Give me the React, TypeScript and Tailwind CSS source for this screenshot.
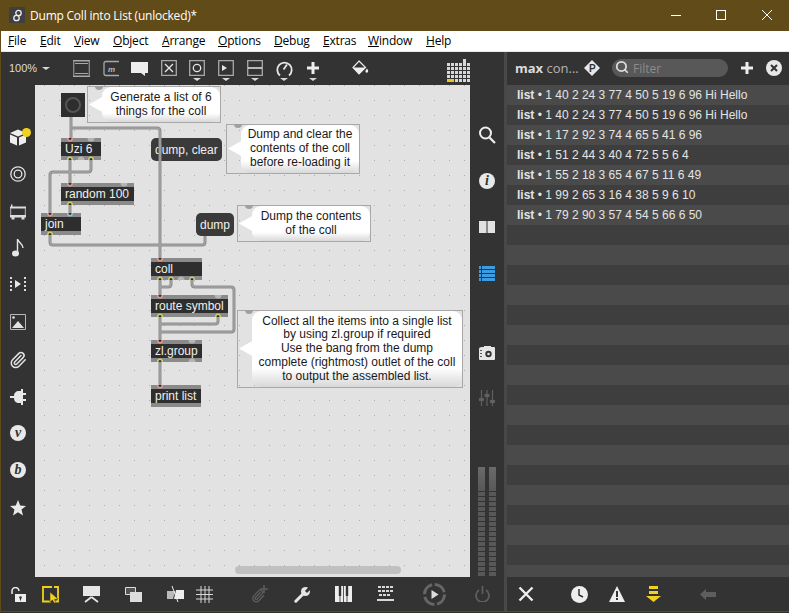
import type { ReactNode } from "react";
import { Paperclip, Search } from "lucide-react";

const LOG = [
  "1 40 2 24 3 77 4 50 5 19 6 96 Hi Hello",
  "1 40 2 24 3 77 4 50 5 19 6 96 Hi Hello",
  "1 17 2 92 3 74 4 65 5 41 6 96",
  "1 51 2 44 3 40 4 72 5 5 6 4",
  "1 55 2 18 3 65 4 67 5 11 6 49",
  "1 99 2 65 3 16 4 38 5 9 6 10",
  "1 79 2 90 3 57 4 54 5 66 6 50",
];
const MENU = [
  ["F", "ile", "left-[8px]"],
  ["E", "dit", "left-[40px]"],
  ["V", "iew", "left-[74px]"],
  ["O", "bject", "left-[113px]"],
  ["A", "rrange", "left-[162px]"],
  ["O", "ptions", "left-[218px]"],
  ["D", "ebug", "left-[274px]"],
  ["E", "xtras", "left-[323px]"],
  ["W", "indow", "left-[368px]"],
  ["H", "elp", "left-[426px]"],
];

function Ic({ c, box = "0 0 16 16", children }: { c: string; box?: string; children: ReactNode }) {
  return (
    <svg className={"absolute " + c} viewBox={box}>
      {children}
    </svg>
  );
}

function Obj({ c, children }: { c: string; children: ReactNode }) {
  return (
    <div className={"absolute flex h-[22px] flex-col justify-center bg-[#8a8a8a] " + c}>
      <div className="flex h-[14px] items-center whitespace-nowrap bg-[#2e2e2e] pl-[4px] text-[12px] text-[#f0f0f0]">{children}</div>
    </div>
  );
}

function Msg({ c, children }: { c: string; children: ReactNode }) {
  return (
    <div className={"absolute flex h-[23px] items-center whitespace-nowrap rounded-[5px] bg-[#3a3a3a] pl-[4px] text-[12px] text-[#f0f0f0] " + c}>
      {children}
    </div>
  );
}

function Comment({ c, children }: { c: string; children: ReactNode }) {
  return (
    <div className={"absolute border border-[#a8a8a8] " + c}>
      <div className="absolute left-[7px] top-[-1px] h-[4px] w-[8px] rounded-b-full bg-[#a0a0a0]" />
      <div className="absolute bottom-0 left-[14px] right-0 top-0 flex flex-col justify-center whitespace-nowrap rounded-[9px] bg-gradient-to-b from-white from-75% to-[#d8d8d8] text-center text-[12px] leading-[13.8px] text-[#1a1a1a]">
        {children}
      </div>
      <svg className="absolute left-[1px] top-[50%] mt-[-9px] h-[17px] w-[15px]" viewBox="0 0 15 17">
        <path d="M0 8.500 15 0v17z" fill="#fff" />
      </svg>
    </div>
  );
}

const Tri = ({ c }: { c: string }) => (
  <div className={"absolute h-0 w-0 border-x-[4px] border-t-[3px] border-x-transparent border-t-[#d8d8d8] " + c} />
);

const cords = [
  "M71 117V138",
  "M71 128H157Q160 128 160 131V258",
  "M70 160V183",
  "M91 160V169Q91 172 88 172H53Q50 172 50 175V213",
  "M70 205V213",
  "M50 235V242Q50 245 53 245H202Q205 245 205 242V236",
  "M160 280V295",
  "M171 280V284Q171 287 168 287H160",
  "M192 280V284Q192 287 195 287H231Q234 287 234 290V329Q234 332 231 332H160",
  "M160 317V340",
  "M218 317V321Q218 324 215 324H160",
  "M160 362V385",
];
const inlets = [[70, 138], [70, 183], [50, 213], [160, 258], [160, 295], [160, 340], [160, 385]];
const outlets = [[70, 160], [91, 160], [70, 205], [50, 235], [160, 280], [171, 280], [192, 280], [160, 317], [218, 317], [160, 362]];
const bumpsTop = [[91, 138], [124, 183], [192, 340], [218, 295]];
const bumpsBottom = [[81, 160], [181, 280], [192, 362]];

function Ports() {
  return (
    <svg className="absolute left-0 top-0 h-[613px] w-[789px]" viewBox="0 0 789 613">
      {bumpsTop.map(([x, y], i) => (
        <path key={"bt" + i} d={"M" + (x - 3.5) + " " + y + "a3.5 3.5 0 0 0 7 0z"} fill="#b4b4b4" />
      ))}
      {bumpsBottom.map(([x, y], i) => (
        <path key={"bb" + i} d={"M" + (x - 3.5) + " " + y + "a3.5 3.5 0 0 1 7 0z"} fill="#b4b4b4" />
      ))}
      {inlets.map(([x, y], i) => (
        <g key={"in" + i}>
          <path d={"M" + (x - 3) + " " + y + "a3 3.5 0 0 0 6 0z"} fill="#e39a8e" />
          <path d={"M" + (x - 1.5) + " " + y + "a1.5 2 0 0 0 3 0z"} fill="#3a2a2a" />
        </g>
      ))}
      <path d="M67 213a3 3.5 0 0 0 6 0z" fill="#8ec8d0" />
      <path d="M68.5 213a1.5 2 0 0 0 3 0z" fill="#2a3a3a" />
      {outlets.map(([x, y], i) => (
        <g key={"out" + i}>
          <path d={"M" + (x - 3) + " " + y + "a3 3.5 0 0 1 6 0z"} fill="#cdd06a" />
          <path d={"M" + (x - 1.5) + " " + y + "a1.5 2 0 0 1 3 0z"} fill="#33331f" />
        </g>
      ))}
    </svg>
  );
}

export default function App() {
  return (
    <div className="relative h-[613px] w-[789px] overflow-hidden bg-[#333333] [font-family:Liberation_Sans,Arial,sans-serif]">
      {/* title bar */}
      <div className="absolute left-0 top-0 h-[31px] w-full bg-[#614b18]" />
      <div className="absolute left-[9px] top-[7px] flex h-[16px] w-[16px] items-center justify-center bg-[#3f3f3f]">
        <svg className="h-[13px] w-[13px]" viewBox="0 0 13 13" fill="none" stroke="#eee" strokeWidth="1.3">
          <circle cx="7.500" cy="4" r="2.700" />
          <circle cx="5.500" cy="9" r="2.700" />
        </svg>
      </div>
      <div className="absolute left-[30px] top-[7px] text-[12px] leading-[17px] tracking-[-0.22px] text-white [font-family:Open_Sans,sans-serif]">
        Dump Coll into List (unlocked)*
      </div>
      <div className="absolute left-[671px] top-[15px] h-px w-[10px] bg-white" />
      <div className="absolute left-[716px] top-[10px] h-[10px] w-[10px] border border-white" />
      <svg className="absolute left-[762px] top-[10px] h-[10px] w-[10px]" viewBox="0 0 10 10" stroke="#fff">
        <path d="M0 0 10 10M10 0 0 10" />
      </svg>

      {/* menu */}
      <div className="absolute left-0 top-[31px] h-[20px] w-full bg-white" />
      {MENU.map(([u, rest, pos]) => (
        <div key={pos} className={"absolute top-[33px] text-[12px] leading-[16px] tracking-[-0.2px] text-black [font-family:Open_Sans,sans-serif] " + pos}>
          <span className="underline">{u}</span>
          {rest}
        </div>
      ))}
      <div className="absolute left-0 top-[51px] h-px w-full bg-[#e8e8e8]" />

      {/* patcher toolbar */}
      <div className="absolute left-[9px] top-[61px] text-[11px] leading-[14px] text-[#dddddd]">100%</div>
      <Tri c="left-[42px] top-[67px]" />
      <Ic c="left-[73px] top-[60px] h-[17px] w-[17px]" box="0 0 17 17">
        <path d="M0 0h17v1.500H0zM0 15.500h17V17H0zM2 3h13v1H2zM2 13h13v1H2z" fill="#a8a8a8" />
        <path d="M.7 1v15M16.300 1v15" stroke="#8a8a8a" strokeWidth="1.300" fill="none" />
      </Ic>
      <Ic c="left-[103px] top-[60px] h-[17px] w-[16px]">
        <path d="M16 1H3Q1 1 1 3v10q0 2 2 2h13" fill="none" stroke="#a8a8a8" strokeWidth="1.300" />
        <text x="5" y="11" fontSize="8" fontStyle="italic" fontWeight="700" fill="#b8b8b8">m</text>
      </Ic>
      <Ic c="left-[131px] top-[61px] h-[16px] w-[17px]" box="0 0 17 16">
        <path d="M0 1h17v11h-3v3l-4-3H0z" fill="#eeeeee" />
      </Ic>
      <Ic c="left-[161px] top-[60px] h-[16px] w-[16px]">
        <path d="M.7.700h14.600v14.600H.7z" fill="none" stroke="#a8a8a8" strokeWidth="1.300" />
        <path d="M4 4l8 8M12 4l-8 8" stroke="#e6e6e6" strokeWidth="1.300" />
      </Ic>
      <Ic c="left-[189px] top-[60px] h-[16px] w-[16px]">
        <path d="M.7.700h14.600v14.600H.7z" fill="none" stroke="#a8a8a8" strokeWidth="1.300" />
        <circle cx="8" cy="8" r="3.700" fill="none" stroke="#e6e6e6" strokeWidth="1.300" />
      </Ic>
      <Ic c="left-[218px] top-[60px] h-[16px] w-[16px]">
        <path d="M.7.700h14.600v14.600H.7z" fill="none" stroke="#a8a8a8" strokeWidth="1.300" />
        <path d="M4 5l5 3-5 3z" fill="#e6e6e6" />
      </Ic>
      <Ic c="left-[247px] top-[60px] h-[16px] w-[16px]">
        <path d="M.7.700h14.600v14.600H.7z" fill="none" stroke="#a8a8a8" strokeWidth="1.300" />
        <path d="M1 8h14" stroke="#e6e6e6" strokeWidth="1.500" />
      </Ic>
      <Ic c="left-[276px] top-[60px] h-[17px] w-[17px]" box="0 0 17 17">
        <path d="M4 15.500A7.200 7.200 0 1 1 13 15.500" fill="none" stroke="#e6e6e6" strokeWidth="1.800" />
        <path d="M7.600 9.500 11 4.500" stroke="#e6e6e6" strokeWidth="1.800" />
      </Ic>
      <Ic c="left-[307px] top-[62px] h-[12px] w-[12px]" box="0 0 12 12">
        <path d="M4.500 0h3v4.500H12v3H7.500V12h-3V7.500H0v-3h4.500z" fill="#eeeeee" />
      </Ic>
      <Tri c="left-[193px] top-[78px]" />
      <Tri c="left-[222px] top-[78px]" />
      <Tri c="left-[251px] top-[78px]" />
      <Tri c="left-[280px] top-[78px]" />
      <Tri c="left-[309px] top-[78px]" />
      <Ic c="left-[352px] top-[60px] h-[16px] w-[17px]" box="0 0 17 16">
        <path d="M7 1 13.500 7.500 7 14 1 7.500z" fill="none" stroke="#eeeeee" strokeWidth="1.200" />
        <path d="M1 7.500h12.500L7 14z" fill="#eeeeee" />
        <path d="M15 8.500c1 1.500 1.500 2.500 1 3.500s-2 1-2.500 0 .5-2 1.500-3.500z" fill="#eeeeee" />
      </Ic>
      <div className="absolute left-[447px] top-[63px] grid grid-cols-[repeat(6,3px)] grid-rows-[repeat(5,3px)] gap-px">
        {Array.from({ length: 30 }).map((_, i) => (
          <div key={i} className="bg-[#d8d8d8]" />
        ))}
      </div>
      <div className="absolute left-[463px] top-[59px] h-[4px] w-[3px] bg-[#d8d8d8]" />
      <div className="absolute left-[447px] top-[79px] h-[3px] w-[7px] bg-[#e8c820]" />

      {/* left sidebar */}
      <Ic c="left-[10px] top-[129px] h-[17px] w-[16px]">
        <path d="M8 0 16 3.500 8 7 0 3.500z" fill="#eeeeee" />
        <path d="M0 5l7 3v8l-7-3zM16 5l-7 3v8l7-3z" fill="#eeeeee" />
      </Ic>
      <div className="absolute left-[22px] top-[128px] h-[9px] w-[9px] rounded-full bg-[#f0d21e]" />
      <Ic c="left-[10px] top-[166px] h-[16px] w-[16px]">
        <circle cx="8" cy="8" r="7.200" fill="none" stroke="#e2e2e2" strokeWidth="1.300" />
        <circle cx="8" cy="8" r="3.800" fill="none" stroke="#e2e2e2" strokeWidth="1.300" />
      </Ic>
      <Ic c="left-[10px] top-[204px] h-[16px] w-[16px]">
        <path d="M0 2.500h16v2H0zM0 11h16v2.500H0zM1.500 13h3v2.500h-3zM11.500 13h3v2.500h-3zM1 .5h1.500v2H1z" fill="#dddddd" />
        <path d="M.7 4v7M15.300 4v7" stroke="#bbb" />
      </Ic>
      <Ic c="left-[12px] top-[239px] h-[18px] w-[12px]" box="0 0 12 18">
        <ellipse cx="3.500" cy="14.500" rx="3.500" ry="3" fill="#e6e6e6" />
        <path d="M5.500 14V0c1 4 5 4 5.500 9" fill="none" stroke="#e6e6e6" strokeWidth="1.400" />
      </Ic>
      <Ic c="left-[10px] top-[277px] h-[16px] w-[16px]">
        <path d="M0 0h2v2H0zM0 4h2v2H0zM0 8h2v2H0zM0 12h2v2H0zM14 0h2v2h-2zM14 4h2v2h-2zM14 8h2v2h-2zM14 12h2v2h-2z" fill="#dddddd" />
        <path d="M5 3l6 4-6 4z" fill="#e8e8e8" />
      </Ic>
      <Ic c="left-[10px] top-[314px] h-[16px] w-[16px]">
        <path d="M.5.500h15v15H.5z" fill="#333" stroke="#b8b8b8" />
        <path d="M2 14 8 7l6 7z" fill="#e2e2e2" />
        <circle cx="3.500" cy="3.500" r="1.300" fill="#e2e2e2" />
      </Ic>
      <Paperclip className="absolute left-[9px] top-[351px] h-[18px] w-[18px] text-[#e2e2e2]" strokeWidth={2} />
      <Ic c="left-[10px] top-[389px] h-[16px] w-[16px]">
        <path d="M0 7h4c0-3 2-5 5-5h2V0h2v4h3v2h-3v4h3v2h-3v4h-2v-2H9c-3 0-5-2-5-5H0z" fill="#e8e8e8" />
      </Ic>
      <div className="absolute left-[10px] top-[425px] flex h-[16px] w-[16px] items-center justify-center rounded-full bg-[#e8e8e8] text-[14px] font-bold italic leading-none text-[#333333] [font-family:Liberation_Serif,serif]">
        v
      </div>
      <div className="absolute left-[10px] top-[462px] flex h-[16px] w-[16px] items-center justify-center rounded-full bg-[#e8e8e8] text-[14px] font-bold italic leading-none text-[#333333] [font-family:Liberation_Serif,serif]">
        b
      </div>
      <Ic c="left-[10px] top-[500px] h-[16px] w-[16px]">
        <path d="M8 0l2.200 5.500 5.800.4-4.500 3.700 1.500 5.900L8 12.300l-5 3.200 1.500-5.900L0 5.900l5.800-.4z" fill="#e8e8e8" />
      </Ic>

      {/* canvas */}
      <div className="absolute left-[35px] top-[85px] h-[492px] w-[435px] bg-[#e2e2e2] bg-[radial-gradient(circle_at_0.5px_0.5px,#adadad_0.6px,transparent_0.7px)] bg-[position:9px_0px] bg-[size:15px_15px]" />
      <div className="absolute left-[235px] top-[566px] h-[8px] w-[166px] rounded-full bg-[#c0c0c0]" />

      <div className="absolute left-[61px] top-[93px] flex h-[24px] w-[24px] items-center justify-center bg-[#2e2e2e]">
        <div className="h-[16px] w-[16px] rounded-full border-2 border-[#555555]" />
      </div>
      <Comment c="left-[87px] top-[86px] h-[37px] w-[134px]">
        <span>Generate a list of 6</span>
        <span>things for the coll</span>
      </Comment>
      <Comment c="left-[226px] top-[124px] h-[50px] w-[134px]">
        <span>Dump and clear the</span>
        <span>contents of the coll</span>
        <span>before re-loading it</span>
      </Comment>
      <Comment c="left-[237px] top-[205px] h-[37px] w-[134px]">
        <span>Dump the contents</span>
        <span>of the coll</span>
      </Comment>
      <Comment c="left-[237px] top-[310px] h-[78px] w-[226px]">
        <span>Collect all the items into a single list</span>
        <span>by using zl.group if required</span>
        <span>Use the bang from the dump</span>
        <span>complete (rightmost) outlet of the coll</span>
        <span>to output the assembled list.</span>
      </Comment>

      <Obj c="left-[61px] top-[138px] w-[40px]">Uzi 6</Obj>
      <Obj c="left-[61px] top-[183px] w-[73px]">random 100</Obj>
      <Obj c="left-[41px] top-[213px] w-[40px]">join</Obj>
      <Obj c="left-[151px] top-[258px] w-[51px]">coll</Obj>
      <Obj c="left-[151px] top-[295px] w-[77px]">route symbol</Obj>
      <Obj c="left-[151px] top-[340px] w-[51px]">zl.group</Obj>
      <Obj c="left-[151px] top-[385px] w-[50px]">print list</Obj>
      <Msg c="left-[151px] top-[138px] w-[71px]">dump, clear</Msg>
      <Msg c="left-[196px] top-[213px] w-[38px]">dump</Msg>

      <svg className="absolute left-0 top-0 h-[613px] w-[789px]" viewBox="0 0 789 613" fill="none">
        {cords.map((d) => (
          <path key={d} d={d} stroke="#8e8e8e" strokeWidth="3" />
        ))}
        {cords.map((d) => (
          <path key={d} d={d} stroke="#a8a8a8" strokeWidth="1" />
        ))}
      </svg>
      <Ports />

      {/* patcher right strip */}
      <Ic c="left-[478px] top-[126px] h-[18px] w-[18px]" box="0 0 18 18">
        <circle cx="7.500" cy="7" r="5.500" fill="none" stroke="#eeeeee" strokeWidth="2" />
        <path d="M11.500 11.500 17 17" stroke="#eeeeee" strokeWidth="2.200" />
      </Ic>
      <div className="absolute left-[479px] top-[173px] flex h-[16px] w-[16px] items-center justify-center rounded-full bg-[#e8e8e8] text-[14px] font-bold italic leading-none text-[#333333] [font-family:Liberation_Serif,serif]">
        i
      </div>
      <div className="absolute left-[479px] top-[221px] flex h-[12px] w-[16px] justify-between bg-[#e2e2e2]">
        <div className="ml-[7px] h-full w-[2px] bg-[#8a8a8a]" />
      </div>
      <Ic c="left-[479px] top-[266px] h-[15px] w-[16px]" box="0 0 16 15">
        <path d="M0 0h2v3H0zM3 0h13v3H3zM0 4h2v3H0zM3 4h13v3H3zM0 8h2v3H0zM3 8h13v3H3zM0 12h2v3H0zM3 12h13v3H3z" fill="#3d9be0" />
      </Ic>
      <Ic c="left-[479px] top-[345px] h-[16px] w-[16px]">
        <path d="M3 2h2V1h7v1h3q1 0 1 1v11q0 1-1 1H1q-1 0-1-1V4q0-2 3-2z" fill="#e6e6e6" />
        <circle cx="9.500" cy="9" r="3.200" fill="#333" />
        <circle cx="9.500" cy="9" r="1.300" fill="#e6e6e6" />
        <path d="M1 5h2v1H1zM1 8h2v1H1zM1 11h2v1H1z" fill="#555" />
      </Ic>
      <Ic c="left-[479px] top-[390px] h-[16px] w-[16px]">
        <path d="M2.500 0v16M8 0v16M13.500 0v16" stroke="#606060" strokeWidth="1.200" />
        <path d="M0 8h5v3H0zM5.500 4h5v3h-5zM11 10h5v3h-5z" fill="#606060" />
      </Ic>
      <div className="absolute left-[478px] top-[467px] h-[24px] w-[7px] bg-gradient-to-b from-[#6a6a6a] to-[#585858]" />
      <div className="absolute left-[489px] top-[467px] h-[24px] w-[7px] bg-gradient-to-b from-[#6a6a6a] to-[#585858]" />
      <div className="absolute left-[478px] top-[492px] flex w-[7px] flex-col gap-px">
        {Array.from({ length: 17 }).map((_, i) => (
          <div key={i} className="h-[4px] bg-[#585858]" />
        ))}
      </div>
      <div className="absolute left-[489px] top-[492px] flex w-[7px] flex-col gap-px">
        {Array.from({ length: 17 }).map((_, i) => (
          <div key={i} className="h-[4px] bg-[#585858]" />
        ))}
      </div>

      {/* divider */}
      <div className="absolute left-[504px] top-[52px] h-[559px] w-[3px] bg-[#484848]" />

      {/* max console */}
      <div className="absolute left-[515px] top-[60px] text-[13px] leading-[17px] text-[#b4b4b4] [font-family:Open_Sans,sans-serif]">
        <span className="font-bold text-[#dcdcdc]">max</span> con...
      </div>
      <Ic c="left-[584px] top-[60px] h-[16px] w-[16px]">
        <path d="M8 0l8 8-8 8-8-8z" fill="#e8e8e8" />
        <text x="5" y="11.500" fontSize="10" fontWeight="700" fill="#333">P</text>
      </Ic>
      <div className="absolute left-[612px] top-[59px] h-[18px] w-[116px] rounded-full bg-[#585858]" />
      <Search className="absolute left-[615px] top-[60px] h-[14px] w-[14px] text-[#dddddd]" strokeWidth={3} />
      <div className="absolute left-[633px] top-[61px] text-[12px] leading-[16px] text-[#8c8c8c] [font-family:Open_Sans,sans-serif]">Filter</div>
      <Ic c="left-[741px] top-[62px] h-[12px] w-[12px]" box="0 0 12 12">
        <path d="M4.500 0h3v4.500H12v3H7.500V12h-3V7.500H0v-3h4.500z" fill="#eeeeee" />
      </Ic>
      <Ic c="left-[766px] top-[60px] h-[16px] w-[16px]">
        <circle cx="8" cy="8" r="8" fill="#e8e8e8" />
        <path d="M5 5l6 6M11 5l-6 6" stroke="#333" strokeWidth="2" />
      </Ic>
      <div className="absolute left-[507px] top-[85px] flex h-[492px] w-[282px] flex-col overflow-hidden">
        {Array.from({ length: 25 }).map((_, i) => (
          <div
            key={i}
            className={"h-[20px] shrink-0 whitespace-nowrap pl-[10px] text-[12px] leading-[20px] text-[#e4e4e4] " + (i % 2 === 0 ? "bg-[#4a4a4a]" : "bg-[#3e3e3e]")}
          >
            {LOG[i] ? (
              <>
                <span className="font-bold">list</span> • {LOG[i]}
              </>
            ) : null}
          </div>
        ))}
      </div>

      {/* bottom toolbar */}
      <Ic c="left-[10px] top-[587px] h-[16px] w-[16px]">
        <path d="M2 7V4a3.500 3.500 0 0 1 7 0" fill="none" stroke="#eeeeee" strokeWidth="1.500" />
        <path d="M5 7h11v8H5z" fill="#eeeeee" />
        <circle cx="10.500" cy="10.500" r="1.300" fill="#333" />
        <path d="M10 11h1v2.500h-1z" fill="#333" />
      </Ic>
      <Ic c="left-[42px] top-[586px] h-[17px] w-[17px]" box="0 0 17 17">
        <path d="M10 1H1v14.500h8M12 15.500h4V1h-4" fill="none" stroke="#f0d21e" strokeWidth="1.800" />
        <path d="M8 6l8 7-3.500.5L14 17h-2l-1.500-3L8 16z" fill="#f0d21e" stroke="#333" strokeWidth=".5" />
      </Ic>
      <Ic c="left-[83px] top-[586px] h-[17px] w-[17px]" box="0 0 17 17">
        <path d="M0 0h17v10H0z" fill="#e6e6e6" />
        <path d="M8.500 11 2 16M8.500 11 15 16" stroke="#e6e6e6" strokeWidth="1.800" />
      </Ic>
      <Ic c="left-[125px] top-[587px] h-[15px] w-[17px]" box="0 0 17 15">
        <path d="M.5.500h10v7H.5z" fill="#555" stroke="#ddd" />
        <path d="M5 5h12v10H5z" fill="#dddddd" />
      </Ic>
      <Ic c="left-[167px] top-[586px] h-[17px] w-[17px]" box="0 0 17 17">
        <path d="M0 5h8l-2 8H0z" fill="#bbbbbb" />
        <path d="M9 4h8v9H7z" fill="#eeeeee" />
        <path d="M5 0l6 16" stroke="#eeeeee" strokeWidth="1" />
      </Ic>
      <Ic c="left-[196px] top-[586px] h-[17px] w-[17px]" box="0 0 17 17">
        <path d="M5 0v17M9 0v17M13 0v17M0 4h17M0 8.500h17M0 13h17" stroke="#d8d8d8" strokeWidth="1" />
      </Ic>
      <Paperclip className="absolute left-[251px] top-[589px] h-[14px] w-[14px] text-[#5e5e5e]" strokeWidth={2.2} />
      <Ic c="left-[260px] top-[585px] h-[8px] w-[8px]" box="0 0 8 8">
        <path d="M4 0v8M0 4h8" stroke="#5e5e5e" strokeWidth="1.500" />
      </Ic>
      <Ic c="left-[294px] top-[586px] h-[17px] w-[17px]" box="0 0 17 17">
        <path d="M1.800 15.200 9.500 7.500" stroke="#e6e6e6" strokeWidth="3" strokeLinecap="round" />
        <circle cx="11.500" cy="5.500" r="4.500" fill="#e6e6e6" />
        <path d="M11 5 15 .5 17 3 13 7z" fill="#333333" />
      </Ic>
      <Ic c="left-[335px] top-[586px] h-[16px] w-[17px]" box="0 0 17 16">
        <path d="M0 0h17v16H0z" fill="#eeeeee" />
        <path d="M3.800 0H6.200v10H5.400v6H4.600V10H3.800zM8.100 0H8.900v16H8.100zM10.800 0h2.400v10h-.8v6h-.8V10h-.8z" fill="#333" />
      </Ic>
      <Ic c="left-[377px] top-[586px] h-[16px] w-[17px]" box="0 0 17 16">
        <path d="M1 0h3v2H1zM5 0h3v2H5zM9 0h3v2H9zM13 0h3v2h-3zM1 4h3v2H1zM5 4h3v2H5zM9 4h3v2H9zM13 4h3v2h-3zM2 8h3v2H2zM6 8h3v2H6zM10 8h3v2h-3zM0 13h17v2H0z" fill="#d8d8d8" />
      </Ic>
      <Ic c="left-[423px] top-[583px] h-[23px] w-[23px]" box="0 0 23 23">
        <circle cx="11.500" cy="11.500" r="10" fill="none" stroke="#666" strokeWidth="3" strokeDasharray="13 2.700" />
        <path d="M8.500 7l7 4.500-7 4.500z" fill="#dddddd" />
      </Ic>
      <Ic c="left-[475px] top-[586px] h-[16px] w-[15px]" box="0 0 15 16">
        <path d="M4 4a6.500 6.500 0 1 0 7 0" fill="none" stroke="#5e5e5e" strokeWidth="1.800" />
        <path d="M7.500 0v8" stroke="#5e5e5e" strokeWidth="1.800" />
      </Ic>
      <Ic c="left-[518px] top-[586px] h-[16px] w-[16px]">
        <path d="M1.500 1.500l13 13M14.500 1.500l-13 13" stroke="#eeeeee" strokeWidth="2.400" />
      </Ic>
      <Ic c="left-[571px] top-[586px] h-[17px] w-[17px]" box="0 0 17 17">
        <circle cx="8.500" cy="8.500" r="8.500" fill="#eeeeee" />
        <path d="M8 3v6l4 2" fill="none" stroke="#333" strokeWidth="1.500" />
      </Ic>
      <Ic c="left-[609px] top-[586px] h-[16px] w-[16px]">
        <path d="M8 0l8 16H0z" fill="#eeeeee" />
        <path d="M7 5h2v6H7zM7 12h2v2H7z" fill="#333" />
      </Ic>
      <Ic c="left-[646px] top-[586px] h-[16px] w-[15px]" box="0 0 15 16">
        <path d="M3 0h9v3H3zM3 5h9v3H3zM0 10h15l-7.500 6z" fill="#f0d21e" />
      </Ic>
      <Ic c="left-[700px] top-[589px] h-[11px] w-[16px]" box="0 0 16 11">
        <path d="M6 0v3h10v5H6v3L0 5.500z" fill="#5e5e5e" />
      </Ic>

      {/* window edges */}
      <div className="absolute left-0 top-[31px] h-[580px] w-px bg-[#614b18]" />
      <div className="absolute bottom-[1px] left-0 h-px w-full bg-[#614b18]" />
      <div className="absolute bottom-0 left-0 h-px w-full bg-[#2f2f25]" />
    </div>
  );
}
